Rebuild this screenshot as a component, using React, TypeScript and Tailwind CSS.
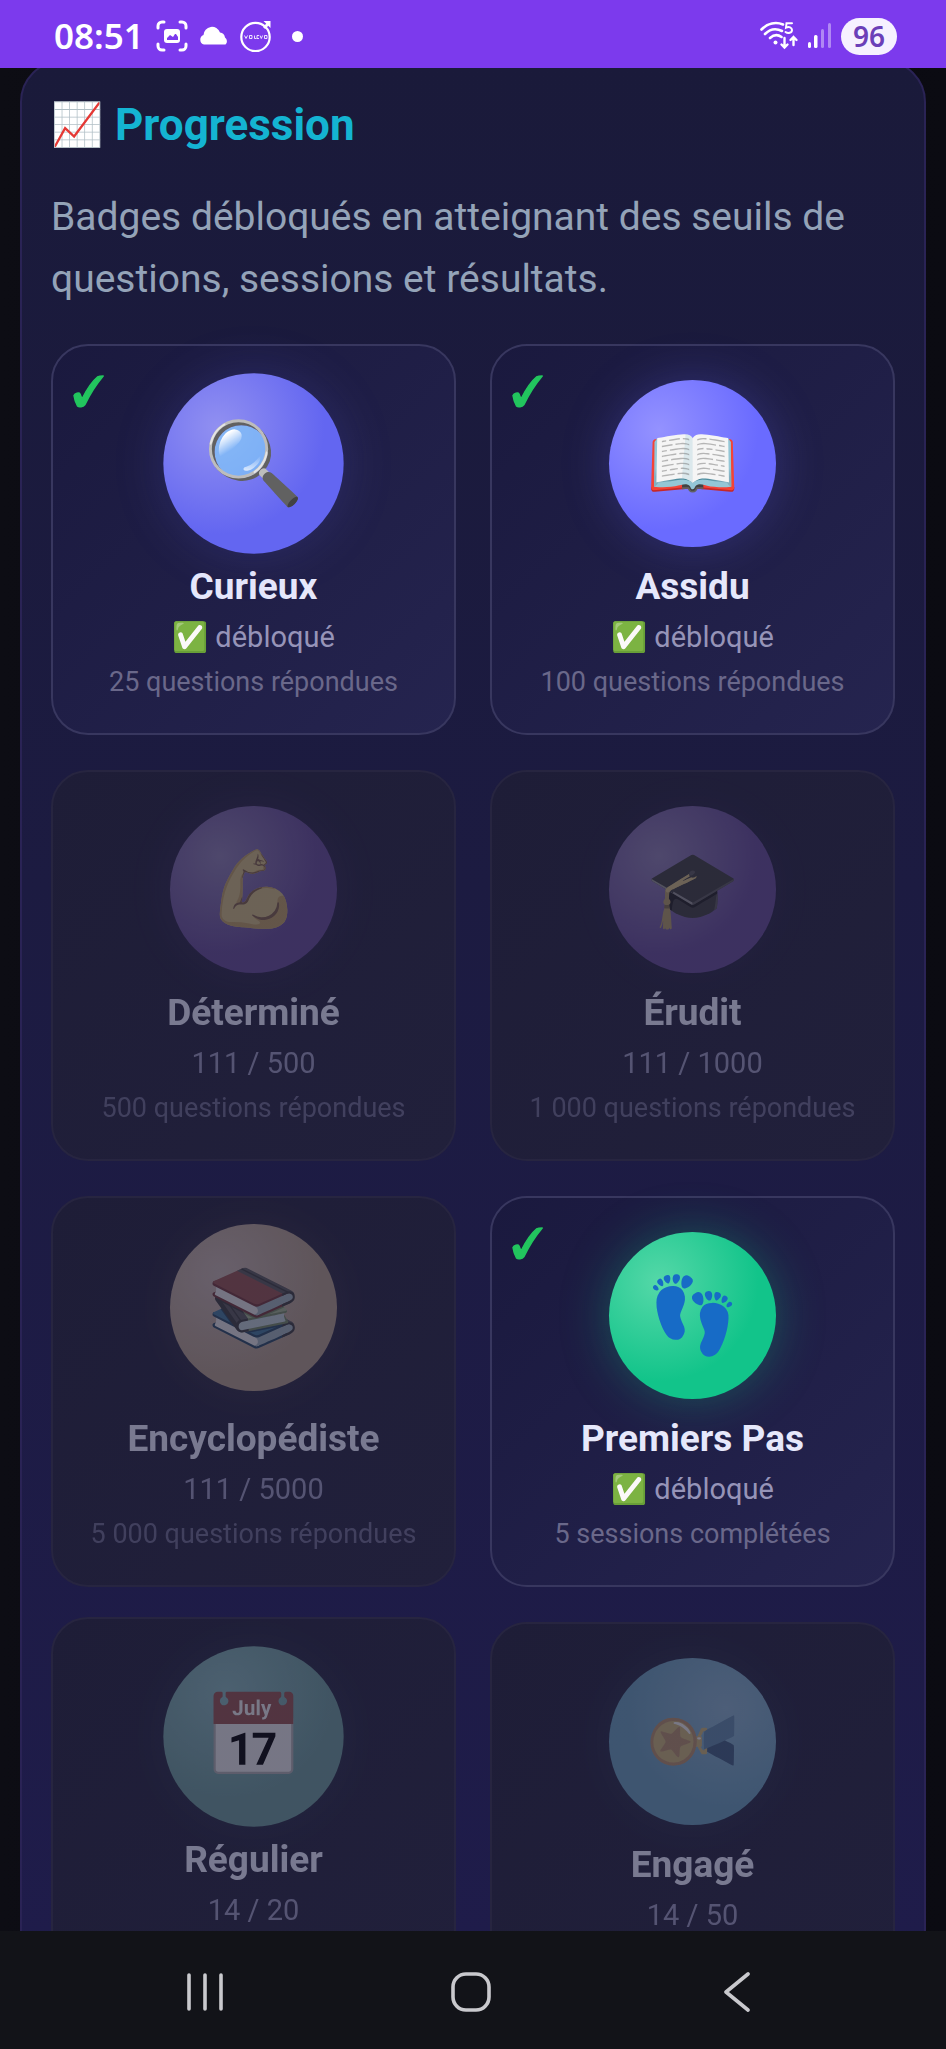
type Badge = {
  name: string;
  emoji: string;
  status: string;
  detail?: string;
  unlocked?: boolean;
  disc: string;
  card?: string;
};

const badges: Badge[] = [
  {
    name: 'Curieux',
    emoji: '🔍',
    status: '✅ débloqué',
    detail: '25 questions répondues',
    unlocked: true,
    disc: 'scale-108 bg-[radial-gradient(circle_at_30%_30%,#9190f1,#6366f1_60%)] shadow-[0_0_48px_rgba(99,102,241,0.2)]',
  },
  {
    name: 'Assidu',
    emoji: '📖',
    status: '✅ débloqué',
    detail: '100 questions répondues',
    unlocked: true,
    disc: 'bg-[radial-gradient(circle_at_30%_30%,#9492ff,#6a6bff_60%)] shadow-[0_0_48px_rgba(99,102,241,0.28)]',
  },
  {
    name: 'Déterminé',
    emoji: '💪',
    status: '111 / 500',
    detail: '500 questions répondues',
    disc: 'bg-[radial-gradient(circle_at_30%_30%,#887bab,#604890_60%)] shadow-[0_0_48px_rgba(96,72,144,0.25)]',
  },
  {
    name: 'Érudit',
    emoji: '🎓',
    status: '111 / 1000',
    detail: '1 000 questions répondues',
    disc: 'bg-[radial-gradient(circle_at_30%_30%,#887bab,#604890_60%)] shadow-[0_0_48px_rgba(96,72,144,0.15)]',
  },
  {
    name: 'Encyclopédiste',
    emoji: '📚',
    status: '111 / 5000',
    detail: '5 000 questions répondues',
    disc: '-translate-y-2 bg-[radial-gradient(circle_at_30%_30%,#c1b0a9,#ad9884_60%)] shadow-[0_0_48px_rgba(173,152,124,0.15)]',
  },
  {
    name: 'Premiers Pas',
    emoji: '👣',
    status: '✅ débloqué',
    detail: '5 sessions complétées',
    unlocked: true,
    disc: 'bg-[radial-gradient(circle_at_30%_30%,#55d8a8,#12c48a_60%)] shadow-[0_0_48px_rgba(16,185,129,0.35)]',
  },
  {
    name: 'Régulier',
    emoji: '📅',
    status: '14 / 20',
    card: '-translate-y-[5px]',
    disc: 'scale-108 bg-[radial-gradient(circle_at_35%_25%,#83b1b4,#689695_60%)] shadow-[0_0_48px_rgba(104,150,149,0.15)]',
  },
  {
    name: 'Engagé',
    emoji: '🏅',
    status: '14 / 50',
    disc: 'rotate-90 bg-[radial-gradient(circle_at_30%_30%,#85acc6,#6498b4_60%)] shadow-[0_0_48px_rgba(100,152,180,0.15)]',
  },
];

function StatusBar() {
  return (
    <header className="flex h-[68px] shrink-0 items-center justify-between bg-[#7c3aed] pr-[49px] pl-[54px] pt-1 text-white">
      <div className="flex items-center">
        <time className="font-['Noto_Sans',sans-serif] text-[35px] leading-[44px] font-semibold">08:51</time>
        <svg className="ml-3 h-8 w-8" viewBox="0 0 32 32" fill="none" stroke="white" strokeWidth="3" strokeLinecap="round" aria-hidden="true">
          <path d="M2 8V6a4 4 0 0 1 4-4h2M24 2h2a4 4 0 0 1 4 4v2M30 24v2a4 4 0 0 1-4 4h-2M8 30H6a4 4 0 0 1-4-4v-2" />
          <rect x="8" y="9" width="16" height="14" rx="3" fill="white" stroke="none" />
          <path d="M11 20v-2l3-3 3 2 2-3h1l2 3v3z" fill="#7c3aed" stroke="none" />
        </svg>
        <svg className="ml-2.5 h-8 w-8" viewBox="0 0 32 32" fill="white" aria-hidden="true">
          <path d="M6 24.500a5 5 0 0 1-.5-9.500 8.500 8.500 0 0 1 16.500-2.500 6 6 0 0 1 5 5 4.500 4.500 0 0 1 .5 7z" />
        </svg>
        <svg className="ml-2.5 h-8 w-8" viewBox="0 0 32 32" fill="none" stroke="white" aria-hidden="true">
          <circle cx="15.500" cy="17" r="14.200" strokeWidth="2.200" />
          <path d="M23.500 1h7v7z" fill="white" stroke="none" />
          <path d="M24 8l5-5" strokeWidth="3" />
          <path d="M4.500 15.500l1.500 3 1.500-3M9.500 15.500h2.500v3H9.500zM14.500 15.500v3h2M19 15.500h-2v3h2M20 15.500l1.300 3 1.300-3M24.500 15.500h2.500v3h-2.500z" strokeWidth="1" opacity=".85" />
        </svg>
        <span className="ml-5 h-[11px] w-[11px] rounded-full bg-white" />
      </div>
      <div className="flex items-center">
        <svg className="h-[30px] w-[39px]" viewBox="0 0 39 30" fill="none" stroke="white" strokeWidth="2.600" strokeLinecap="round" aria-hidden="true">
          <path d="M1.500 8.500C7.500 2 16 .5 23 3.500M5 13c5-5 11-6 17-3M10 17c3.500-3 8-3.500 11.500-1" />
          <circle cx="15.500" cy="21.500" r="2" fill="white" stroke="none" />
          <path d="M32 2.200h-5.500l-.5 4.500c3-1.500 6-.3 6 2.300 0 3-4 3.800-6.500 2" strokeWidth="2" />
          <path d="M24.500 17v9M21.500 23.500l3 3 3-3M33.500 24v-8M30.500 19l3-3 3 3" strokeWidth="2.400" />
        </svg>
        <svg className="ml-2 h-[26px] w-[26px]" viewBox="0 0 26 26" fill="white" aria-hidden="true">
          <rect x="1" y="19" width="3" height="6" rx="1.500" />
          <rect x="7" y="12" width="3.500" height="13" rx="1.500" />
          <rect x="14" y="6" width="3" height="19" rx="1.500" opacity=".4" />
          <rect x="21" y="0" width="3" height="25" rx="1.500" opacity=".4" />
        </svg>
        <span className="ml-2 flex h-[37px] w-14 items-center justify-center rounded-full bg-[#f6f1ff] font-['Noto_Sans',sans-serif] text-[28px] leading-none font-semibold text-[#6b3fb8]">
          96
        </span>
      </div>
    </header>
  );
}

function BadgeCard({ badge }: { badge: Badge }) {
  const frame = badge.unlocked
    ? 'border-[#38375f] bg-linear-to-br from-[#1a193e] to-[#25244f]'
    : 'border-[#272540] bg-linear-to-br from-[#1e1d37] to-[#21203b]';
  return (
    <li className={`relative min-h-[391px] rounded-[37px] border-2 ${frame} ${badge.card ?? ''}`}>
      {badge.unlocked && (
        <svg className="absolute top-[29px] left-5 h-[33px] w-[31px]" viewBox="0 0 31 33" fill="#22c55e" stroke="#22c55e" strokeWidth="1.500" strokeLinejoin="round" role="img" aria-label="Débloqué">
          <path d="M1 20.500C2 18.500 6 17 7 19L9 24C14 14 19 6.500 24.500 2C26.500 1 28.500 1 30.200 1C23.500 9 17 19 12 29.500C10 32 6 32.500 4.500 31C2.500 27.500 1.500 24 1 20.500Z" />
        </svg>
      )}
      <div className={`flex flex-col items-center pt-[34px] pb-[30px] text-center ${badge.unlocked ? '' : 'opacity-45'}`}>
        <div className={`flex h-[167px] w-[167px] items-center justify-center rounded-full text-[75px] leading-none ${badge.disc}`}>
          <span className={badge.unlocked ? '' : 'brightness-90 grayscale-60'}>{badge.emoji}</span>
        </div>
        <h3 className="mt-[18px] text-[37px] leading-[44px] font-bold text-[#e6e8fb]">{badge.name}</h3>
        <p className="mt-[6px] text-[29px] leading-[44px] text-[#9694b8]">{badge.status}</p>
        {badge.detail && <p className="mt-[3px] text-[27px] leading-[40px] text-[#6a688a]">{badge.detail}</p>}
      </div>
    </li>
  );
}

function NavBar() {
  return (
    <nav className="grid h-[118px] shrink-0 grid-cols-3 bg-[#121318] pt-1 pr-[76px] pl-[72px] text-[#c9c9cd]">
      <button type="button" aria-label="Applications récentes" className="flex items-center justify-center">
        <svg className="h-10 w-10" viewBox="0 0 40 40" fill="none" stroke="currentColor" strokeWidth="3.600" strokeLinecap="round">
          <path d="M4 3v34M20 3v34M36 3v34" />
        </svg>
      </button>
      <button type="button" aria-label="Accueil" className="flex items-center justify-center">
        <svg className="h-10 w-10" viewBox="0 0 40 40" fill="none" stroke="currentColor" strokeWidth="3.600">
          <rect x="2" y="2" width="36" height="36" rx="13" />
        </svg>
      </button>
      <button type="button" aria-label="Retour" className="flex items-center justify-center">
        <svg className="h-10 w-10" viewBox="0 0 40 40" fill="none" stroke="currentColor" strokeWidth="3.600" strokeLinecap="round" strokeLinejoin="round">
          <path d="M31 2L9 20l22 18" />
        </svg>
      </button>
    </nav>
  );
}

export default function App() {
  return (
    <div className="flex h-screen flex-col bg-[#08080f] font-[Roboto,sans-serif]">
      <StatusBar />
      <main className="min-h-0 flex-1 overflow-hidden bg-linear-to-r from-[#0d0d14] via-[#08080f] to-[#0b0b12] px-5">
        <section className="-mt-2 rounded-[42px] border-2 border-[#2a2355] bg-linear-to-b from-[#1a1a3a] to-[#1f1c4b] px-[29px] pt-[35px] pb-8">
          <h2 className="flex items-center gap-3 text-[44px] leading-[56px] font-bold text-[#14b4d2]">
            <span className="text-[42px]">📈</span>
            <span>Progression</span>
          </h2>
          <p className="mt-[33px] text-[39px] leading-[62px] text-[#94a3b8]">
            Badges débloqués en atteignant des seuils de questions, sessions et résultats.
          </p>
          <ul className="mt-[34px] grid grid-cols-2 gap-x-[34px] gap-y-[35px]">
            {badges.map((badge) => (
              <BadgeCard key={badge.name} badge={badge} />
            ))}
          </ul>
        </section>
      </main>
      <NavBar />
    </div>
  );
}
